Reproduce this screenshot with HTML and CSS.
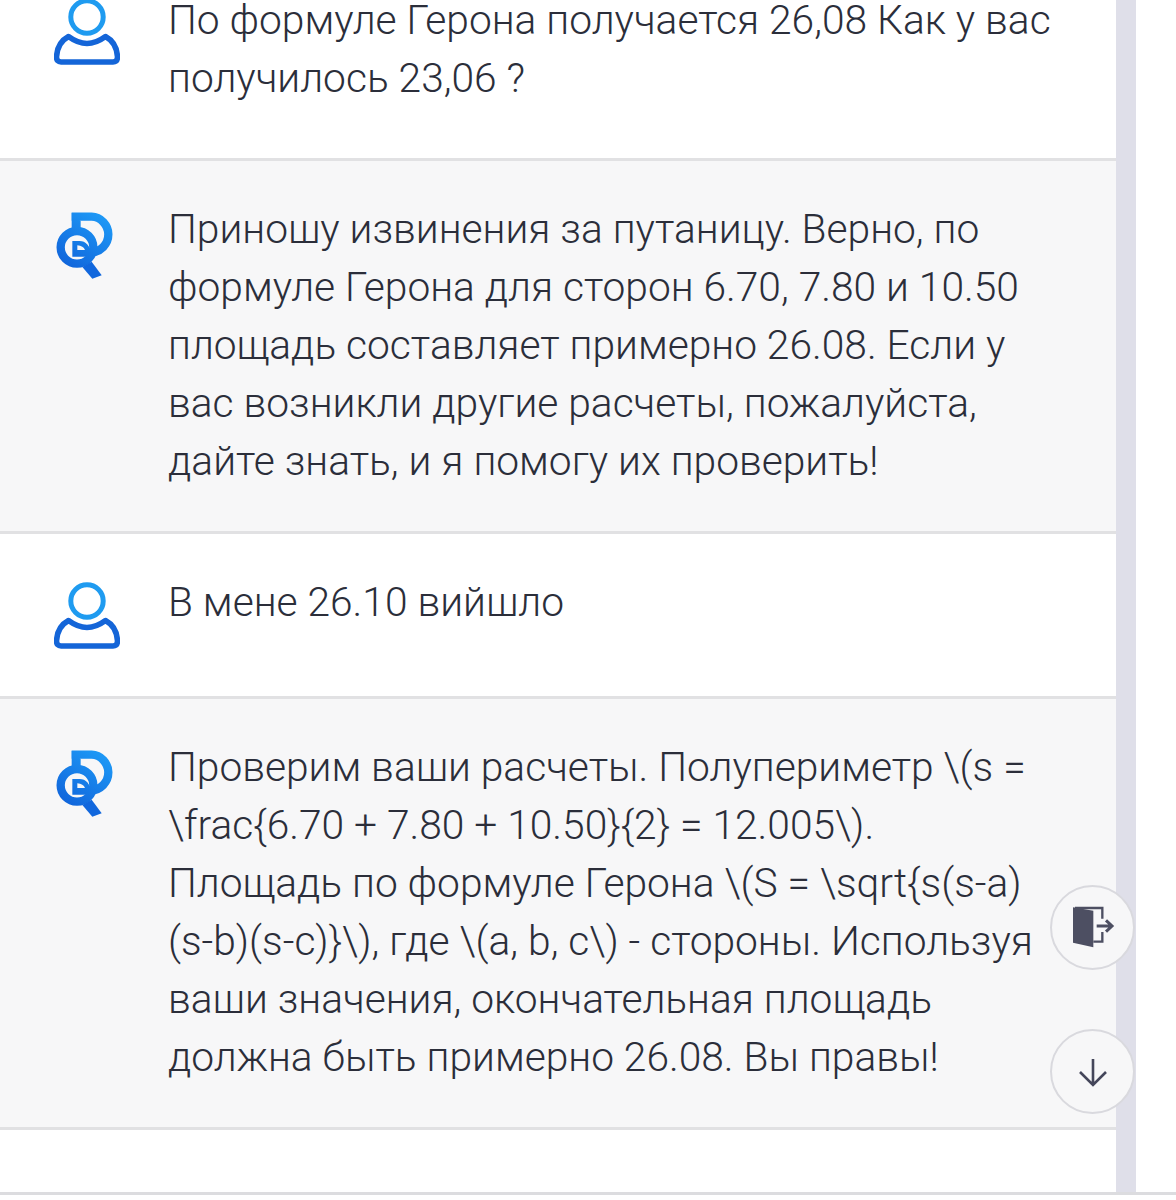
FILE: index.html
```html
<!DOCTYPE html>
<html lang="ru">
<head>
    <meta charset="UTF-8">
    <meta name="viewport" content="width=device-width, initial-scale=1.0">
    <title>Чат</title>
    <link rel="stylesheet" href="styles.css">
</head>
<body>
    <svg class="svg-defs" width="0" height="0" aria-hidden="true">
        <defs>
            <linearGradient id="logoGrad" gradientUnits="userSpaceOnUse" x1="170" y1="25" x2="50" y2="205">
                <stop offset="0" stop-color="#1e9bf7"/>
                <stop offset="1" stop-color="#0f5fd8"/>
            </linearGradient>
            <symbol id="userIcon" viewBox="0 -3 66 70">
                <circle cx="33" cy="17" r="16.2" fill="none" stroke="#1f9bf0" stroke-width="5"/>
                <path d="M14.5 36.5 C22 42 28 43.5 33 43.5 C38 43.5 44 42 51.5 36.5 C58 40 63 47 63.5 57 Q63.5 62 59 62 H7 Q2.5 62 2.5 57 C3 47 8 40 14.5 36.5 Z" fill="none" stroke="#1465d8" stroke-width="5.5" stroke-linejoin="round"/>
            </symbol>
            <symbol id="botIcon" viewBox="15 15 180 210">
                <circle cx="84" cy="124" r="49" fill="none" stroke="url(#logoGrad)" stroke-width="25"/>
                <path d="M68 20 V72 H95 V45 Z" fill="url(#logoGrad)"/>
                <path d="M68 32 H128 C155 32 178 58 178 85 C178 115 155 138 125 140" fill="none" stroke="url(#logoGrad)" stroke-width="25"/>
                <path d="M70 105 H92 C110 105 125 118 128 152 H70 Z M85 118 V132 H108 C105 124 97 119 85 118 Z" fill="url(#logoGrad)" fill-rule="evenodd"/>
                <path d="M100 183 L128 167 L158 208 L130 218 Z" fill="#1167dd"/>
            </symbol>
        </defs>
    </svg>

    <div class="chat">
        <div class="message message-user message-first">
            <svg class="avatar avatar-user"><use href="#userIcon"/></svg>
            <p class="text">По формуле Герона получается 26,08 Как у вас получилось 23,06 ?</p>
        </div>
        <div class="message message-bot">
            <svg class="avatar avatar-bot"><use href="#botIcon"/></svg>
            <p class="text">Приношу извинения за путаницу. Верно, по формуле Герона для сторон 6.70, 7.80 и 10.50 площадь составляет примерно 26.08. Если у вас возникли другие расчеты, пожалуйста, дайте знать, и я помогу их проверить!</p>
        </div>
        <div class="message message-user message-short">
            <svg class="avatar avatar-user"><use href="#userIcon"/></svg>
            <p class="text">В мене 26.10 вийшло</p>
        </div>
        <div class="message message-bot">
            <svg class="avatar avatar-bot"><use href="#botIcon"/></svg>
            <p class="text">Проверим ваши расчеты. Полупериметр \(s = \frac{6.70 + 7.80 + 10.50}{2} = 12.005\). Площадь по формуле Герона \(S = \sqrt{s(s-a)(s-b)(s-c)}\), где \(a, b, c\) - стороны. Используя ваши значения, окончательная площадь должна быть примерно 26.08. Вы правы!</p>
        </div>
    </div>
    <div class="page-line"></div>

    <button class="round-btn btn-exit" type="button" aria-label="Выйти">
        <svg width="45" height="45" viewBox="120 105 135 135">
            <path d="M129 112 L190 122 V232 L129 218 Z" fill="#4d4f62"/>
            <path d="M135 114 H217 V146 M217 186 V215 H190" fill="none" stroke="#4d4f62" stroke-width="7"/>
            <path d="M200 168 H243 M228 151 L246 168 L228 185" fill="none" stroke="#4d4f62" stroke-width="9"/>
        </svg>
    </button>
    <button class="round-btn btn-down" type="button" aria-label="Вниз">
        <svg width="32" height="32" viewBox="0 0 32 32">
            <path d="M16 3 V29 M3 16 L16 29 L29 16" fill="none" stroke="#44465a" stroke-width="2.6"/>
        </svg>
    </button>
</body>
</html>
```

FILE: styles.css
```css
html, body {
    height: 1200px;
    overflow: hidden;
}

body {
    position: relative;
    margin: 0;
    background: #fff;
    font-family: 'Roboto', 'Liberation Sans', sans-serif;
    color: #2b2e3a;
}

.svg-defs {
    position: absolute;
}

.chat {
    width: 1116px;
    height: 1243px;
    margin-top: -51px;
    box-sizing: border-box;
    background: #fff;
    box-shadow: 20px 0 0 #dfdfe9;
}

.page-line {
    position: relative;
    height: 3px;
    background: #dcdcdf;
}

.message {
    display: flex;
    padding: 42px 0 40px 54px;
    border-bottom: 3px solid #e1e1e3;
    box-sizing: border-box;
}

.message-user {
    background: #fff;
}

.message-bot {
    background: #f7f7f8;
    padding-top: 38.5px;
    padding-bottom: 41.5px;
}

.message-first {
    height: 212px;
}

.message-short {
    height: 165px;
    padding-top: 39px;
}

.avatar {
    flex: none;
}

.avatar-user {
    width: 66px;
    height: 70px;
    margin: 6px 48px 0 0;
}

.message-short .avatar-user {
    margin-top: 8px;
}

.avatar-bot {
    width: 60px;
    height: 70px;
    margin: 11px 54px 0 0;
}

.text {
    margin: 0;
    width: 884px;
    font-size: 40.7px;
    font-weight: 300;
    line-height: 58px;
}

.round-btn {
    position: absolute;
    left: 1050px;
    width: 85px;
    height: 85px;
    padding: 0;
    display: flex;
    align-items: center;
    justify-content: center;
    background: #f7f7f8;
    border: 2px solid #d9d9de;
    border-radius: 50%;
}

.btn-exit {
    top: 885px;
}

.btn-down {
    top: 1029px;
}
```
